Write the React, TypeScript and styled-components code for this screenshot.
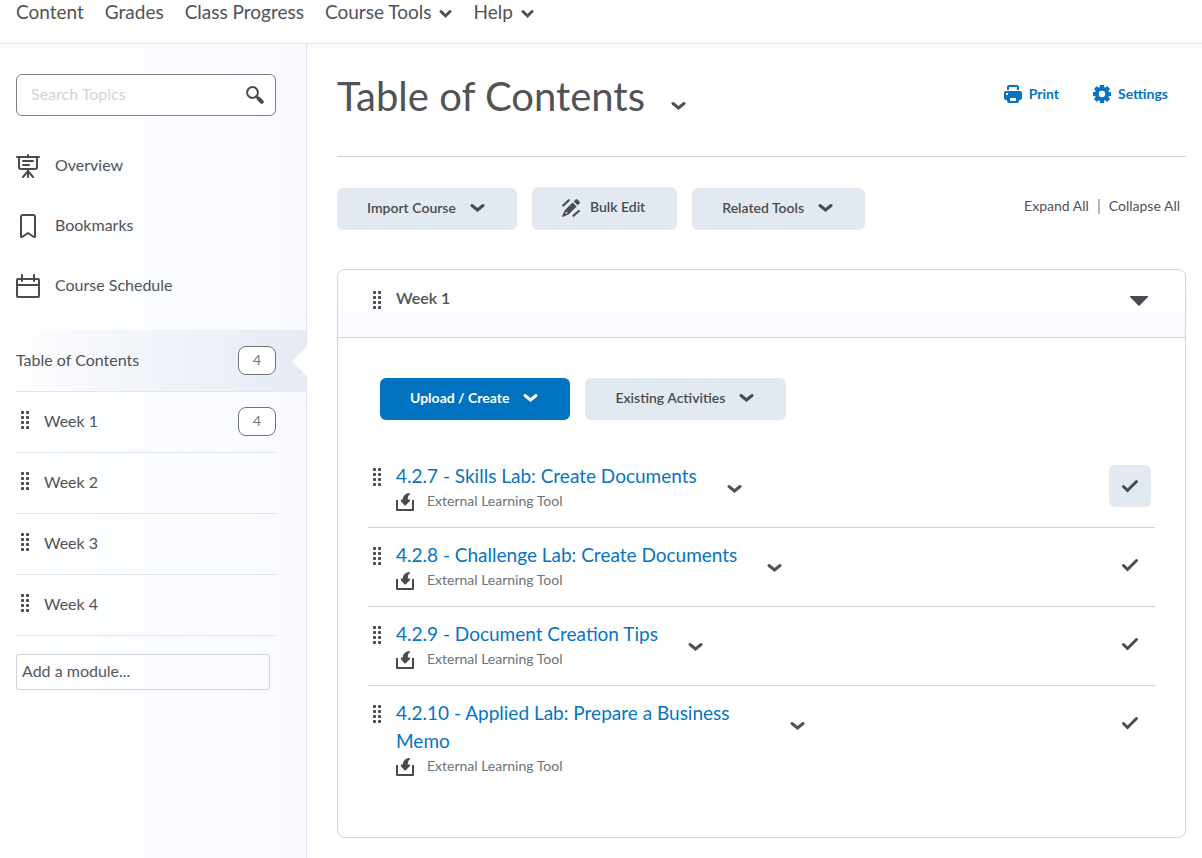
import React from "react";
import styled, { createGlobalStyle, css } from "styled-components";

const ink = "#494c4e";
const text = "#505355";
const blue = "#0674c1";
const line = "#cdd5dc";
const soft = "#e3e9f1";

const GlobalStyle = createGlobalStyle`
  *, *::before, *::after { box-sizing: border-box; }
  body {
    margin: 0;
    background: #fff;
    color: ${text};
    font-family: Lato, "Liberation Sans", sans-serif;
    font-size: 16px;
    line-height: 24px;
  }
  button, input { font: inherit; color: inherit; }
  button { border: 0; padding: 0; background: none; cursor: pointer; }
  a { color: inherit; text-decoration: none; }
  h1, h2, ul { margin: 0; padding: 0; font-weight: 400; }
  ul { list-style: none; }
  svg { display: block; flex: none; }
`;

const Page = styled.div`
  min-height: 100vh;
  display: flex;
  flex-direction: column;
`;

const NavBar = styled.nav`
  height: 44px;
  display: flex;
  align-items: flex-start;
  gap: 21px;
  padding: 0 16px;
  border-bottom: 1px solid #e3e7ea;
  font-size: 19px;
  line-height: 24px;
`;

const NavLink = styled.a``;

const NavMenu = styled.button`
  display: flex;
  align-items: center;
  gap: 8px;
  svg { margin-top: 3px; }
`;

const Columns = styled.div`
  flex: 1;
  display: grid;
  grid-template-columns: 307px minmax(0, 1fr);
  box-shadow: inset 0 4px 0 #f9fafa;
`;

const Sidebar = styled.aside`
  padding: 30px 0 20px;
  border-right: 1px solid #dfe6ef;
  background: linear-gradient(to right, rgba(247, 250, 255, 0), #f8faff);
`;

const SearchBox = styled.form`
  height: 42px;
  margin: 0 30px 19px 16px;
  padding: 0 11px 0 14px;
  display: flex;
  align-items: center;
  border: 1px solid #7c8085;
  border-radius: 6px;
  background: #fff;
`;

const SearchInput = styled.input`
  flex: 1;
  min-width: 0;
  height: 24px;
  padding: 0 0 2px;
  border: 0;
  outline: 0;
  background: none;
  &::placeholder { color: #cdd5e0; opacity: 1; }
`;

const QuickLinks = styled.ul`
  padding: 0 16px;
  margin-bottom: 15px;
`;

const QuickLink = styled.a`
  height: 60px;
  display: flex;
  align-items: center;
  gap: 15px;
`;

const ModuleList = styled.ul``;

const ModuleRow = styled.li<{ $active?: boolean }>`
  height: 61px;
  padding: 0 30px 0 16px;
  position: relative;
  ${(p) =>
    p.$active &&
    css`
      height: 62px;
      background: linear-gradient(to right, rgba(227, 233, 241, 0), #e6ebf4);
      &::after {
        content: "";
        position: absolute;
        right: -1px;
        top: 16px;
        border: 15px solid transparent;
        border-left-width: 0;
        border-right-color: #fff;
      }
    `}
`;

const ModuleLink = styled.a`
  height: 100%;
  display: flex;
  align-items: center;
  border-bottom: 1px solid #dfe6ef;
`;

const ModuleName = styled.span`
  flex: 1;
  padding-bottom: 2px;
`;

const GripSlot = styled.span`
  width: 28px;
  padding: 0 0 4px 5px;
`;

const Count = styled.span`
  width: 38px;
  height: 29px;
  margin-bottom: 1px;
  border: 1px solid #6e7477;
  border-radius: 8px;
  background: #fff;
  color: #72777a;
  font-size: 14px;
  line-height: 26px;
  text-align: center;
`;

const AddModule = styled.input`
  display: block;
  width: 254px;
  height: 36px;
  margin: 18px 0 0 16px;
  padding: 0 5px 4px;
  border: 1px solid ${line};
  border-radius: 3px;
  background: transparent;
  &::placeholder { color: #565a5c; opacity: 1; }
`;

const Main = styled.main`
  padding: 20px 16px 20px 30px;
`;

const TitleBar = styled.header`
  height: 93px;
  display: flex;
  justify-content: space-between;
  border-bottom: 1px solid ${line};
`;

const TitleGroup = styled.div`
  display: flex;
  align-items: flex-start;
  gap: 26px;
`;

const Title = styled.h1`
  font-size: 40px;
  line-height: 64px;
`;

const MenuButton = styled.button<{ $drop?: number }>`
  padding-top: ${(p) => p.$drop ?? 0}px;
`;

const Actions = styled.div`
  display: flex;
  align-items: flex-start;
  gap: 34px;
  padding: 18px 18px 0 0;
`;

const Action = styled.button`
  display: flex;
  align-items: center;
  gap: 7px;
  color: ${blue};
  font-size: 14px;
  font-weight: 700;
`;

const Toolbar = styled.div`
  display: flex;
  align-items: flex-end;
  gap: 15px;
  padding: 30px 0 39px;
`;

const Button = styled.button<{ $primary?: boolean; $tall?: boolean }>`
  height: ${(p) => (p.$tall ? 43 : 42)}px;
  padding: 0 32px ${(p) => (p.$tall ? 3 : 2)}px 30px;
  display: flex;
  align-items: center;
  gap: ${(p) => (p.$tall ? 10 : 14)}px;
  border-radius: 6px;
  background: ${(p) => (p.$primary ? "#0072bf" : soft)};
  color: ${(p) => (p.$primary ? "#fff" : ink)};
  font-size: 14px;
  font-weight: ${(p) => (p.$primary ? 700 : 600)};
`;

const ExpandLinks = styled.div`
  margin: 0 6px 12px auto;
  display: flex;
  align-items: center;
  font-size: 14px;
`;

const Divider = styled.span`
  width: 2px;
  height: 15px;
  margin: 0 9px;
  background: #b1b9be;
`;

const Panel = styled.section`
  border: 1px solid ${line};
  border-radius: 8px;
`;

const PanelHeader = styled.header`
  height: 68px;
  padding: 16px 37px 0 34px;
  display: flex;
  align-items: flex-start;
  border-bottom: 1px solid ${line};
  border-radius: 8px 8px 0 0;
  background: linear-gradient(#fff, #f9fbff);
`;

const PanelTitle = styled.h2`
  flex: 1;
  font-size: 16px;
  font-weight: 600;
`;

const PanelGrip = styled.span`
  width: 24px;
  padding: 5px 0 0 1px;
`;

const PanelTools = styled.div`
  display: flex;
  gap: 15px;
  padding: 40px 42px 29px;
`;

const Topics = styled.ul`
  padding: 0 30px 45px;
`;

const Topic = styled.li`
  padding: 13px 4px 16px;
  display: flex;
  align-items: flex-start;
  border-bottom: 1px solid #c6d3dc;
  &:last-child { border-bottom: 0; }
`;

const TopicGrip = styled.span`
  width: 24px;
  padding: 6px 0 0 1px;
`;

const TopicText = styled.div`
  max-width: 364px;
`;

const TopicLink = styled.a`
  display: block;
  color: ${blue};
  font-size: 19px;
  line-height: 28px;
`;

const TopicKind = styled.div`
  display: flex;
  align-items: flex-end;
  gap: 12px;
  padding-top: 1px;
  color: #6e7376;
  font-size: 14px;
  line-height: 20px;
`;

const TopicMenu = styled.button`
  padding: 22px 0 0 30px;
`;

const DoneButton = styled.button<{ $on?: boolean }>`
  width: 42px;
  height: 42px;
  margin: 3px 0 0 auto;
  display: grid;
  place-items: center;
  border-radius: 6px;
  background: ${(p) => (p.$on ? soft : "transparent")};
`;

const Chevron = ({ width = 15 }: { width?: number }) => (
  <svg width={width} height={10} viewBox={`0 0 ${width} 10`} fill="none" stroke="currentColor" strokeWidth="3" strokeLinecap="round" strokeLinejoin="miter">
    <path d={`M2 2.500L${width / 2} 7L${width - 2} 2.500`} />
  </svg>
);

const Grip = () => (
  <svg width="9" height="18" viewBox="0 0 9 18" fill={ink}>
    {[0, 5, 10, 15].map((y) => (
      <React.Fragment key={y}>
        <rect x="0" y={y} width="3" height="3" rx="0.800" />
        <rect x="5" y={y} width="3" height="3" rx="0.800" />
      </React.Fragment>
    ))}
  </svg>
);

const SearchIcon = () => (
  <svg width="18" height="18" viewBox="0 0 18 18" fill="none" stroke={ink}>
    <circle cx="6.500" cy="6.500" r="5.400" strokeWidth="2" />
    <path d="M10.500 10.500l2 2" strokeWidth="2" />
    <path d="M12.600 12.600l3.200 3.200" strokeWidth="4" strokeLinecap="round" />
  </svg>
);

const OverviewIcon = () => (
  <svg width="24" height="26" viewBox="0 -2 24 26" fill="none" stroke={ink} strokeWidth="2" strokeLinecap="round">
    <path d="M1 3h22M12 1v2M3 3v10a2 2 0 0 0 2 2h14a2 2 0 0 0 2-2V3M7 7h10M7 11h6M12 15v8M12 17l-5 6M12 17l5 6" />
  </svg>
);

const BookmarkIcon = () => (
  <svg width="24" height="26" viewBox="0 -2 24 26" fill="none" stroke={ink} strokeWidth="2" strokeLinejoin="round">
    <path d="M5 3a2 2 0 0 1 2-2h10a2 2 0 0 1 2 2v20h-1l-6-4-6 4H5z" />
  </svg>
);

const CalendarIcon = () => (
  <svg width="24" height="26" viewBox="0 -2 24 26" fill="none" stroke={ink} strokeWidth="2" strokeLinecap="round">
    <rect x="1" y="5" width="22" height="18" rx="1" />
    <path d="M1 11h22M6 1v6M18 1v6" />
  </svg>
);

const PrintIcon = () => (
  <svg width="18" height="18" viewBox="0 0 18 18" fill={blue}>
    <path d="M5 0h8a2 2 0 0 1 2 2v3h-2V2H5v3H3V2a2 2 0 0 1 2-2z" />
    <path fillRule="evenodd" d="M2 6h14a2 2 0 0 1 2 2v5a2 2 0 0 1-2 2h-1v1a2 2 0 0 1-2 2H5a2 2 0 0 1-2-2v-1H2a2 2 0 0 1-2-2V8a2 2 0 0 1 2-2zM6 13v3h6v-3zM2 8v2h2V8z" />
  </svg>
);

const GearIcon = () => (
  <svg width="18" height="18" viewBox="0 0 18 18">
    <g stroke={blue} strokeWidth="4.200" strokeLinecap="butt">
      <path d="M9 0v4M9 14v4M0 9h4M14 9h4M2.400 2.400l3 3M12.600 12.600l3 3M15.600 2.400l-3 3M5.400 12.600l-3 3" />
    </g>
    <circle cx="9" cy="9" r="5.200" fill="none" stroke={blue} strokeWidth="4" />
  </svg>
);

const BulkEditIcon = () => (
  <svg width="18" height="20" viewBox="0 -2 18 20" fill={ink}>
    <path fillRule="evenodd" d="M10.600 3.400l4 4-7.800 7.800L0.800 18 0 17.200l2.800-6zM4 13l-1 2.200 2.200-1 .3-1.500z" />
    <path d="M11.700 2.400L13.600.6a1.500 1.500 0 0 1 2 0l1.800 1.800a1.500 1.500 0 0 1 0 2L15.600 6.300z" />
    <path d="M1.200 6.500L6.800 1.200M11.500 16.800l5.300-4.800" stroke={ink} strokeWidth="2.200" strokeLinecap="round" />
  </svg>
);

const CaretIcon = () => (
  <svg width="18" height="10" viewBox="0 0 18 10" fill={ink}>
    <path d="M0 0h18v1L9.600 9.600a1 1 0 0 1-1.200 0L0 1z" />
  </svg>
);

const ToolIcon = () => (
  <svg width="19" height="18" viewBox="0 0 19 18" fill={ink}>
    <path d="M0 7h2v9h14V7h2v10a1 1 0 0 1-1 1H1a1 1 0 0 1-1-1z" />
    <path d="M13.800 0v1.600C12.300 2.400 11.800 4 11.800 6.500h2.400c0 1.200-.4 1.700-1.200 2.500L9.800 12.200a1 1 0 0 1-1.400 0L5.600 9c-.7-.8-.8-1.400-.8-2.500h2C6.800 3 9.500 0 13.800 0z" />
  </svg>
);

const CheckIcon = () => (
  <svg width="18" height="14" viewBox="0 0 18 14" fill="none" stroke={ink} strokeWidth="3" strokeLinecap="round">
    <path d="M2.500 7.500l4 4 9-9" />
  </svg>
);

const topics = [
  "4.2.7 - Skills Lab: Create Documents",
  "4.2.8 - Challenge Lab: Create Documents",
  "4.2.9 - Document Creation Tips",
  "4.2.10 - Applied Lab: Prepare a Business Memo",
];

const weeks = [
  { name: "Week 1", count: 4 },
  { name: "Week 2" },
  { name: "Week 3" },
  { name: "Week 4" },
];

export default function App() {
  return (
    <Page>
      <GlobalStyle />
      <NavBar>
        <NavLink href="#content">Content</NavLink>
        <NavLink href="#grades">Grades</NavLink>
        <NavLink href="#progress">Class Progress</NavLink>
        <NavMenu>Course Tools <Chevron width={13} /></NavMenu>
        <NavMenu>Help <Chevron width={13} /></NavMenu>
      </NavBar>
      <Columns>
        <Sidebar>
          <SearchBox role="search">
            <SearchInput aria-label="Search Topics" placeholder="Search Topics" />
            <button type="button" aria-label="Search"><SearchIcon /></button>
          </SearchBox>
          <QuickLinks>
            <li><QuickLink href="#overview"><OverviewIcon />Overview</QuickLink></li>
            <li><QuickLink href="#bookmarks"><BookmarkIcon />Bookmarks</QuickLink></li>
            <li><QuickLink href="#schedule"><CalendarIcon />Course Schedule</QuickLink></li>
          </QuickLinks>
          <ModuleList>
            <ModuleRow $active>
              <ModuleLink href="#toc"><ModuleName>Table of Contents</ModuleName><Count>4</Count></ModuleLink>
            </ModuleRow>
            {weeks.map((w) => (
              <ModuleRow key={w.name}>
                <ModuleLink href="#week">
                  <GripSlot><Grip /></GripSlot>
                  <ModuleName>{w.name}</ModuleName>
                  {w.count && <Count>{w.count}</Count>}
                </ModuleLink>
              </ModuleRow>
            ))}
          </ModuleList>
          <AddModule aria-label="Add a module" placeholder="Add a module..." />
        </Sidebar>
        <Main>
          <TitleBar>
            <TitleGroup>
              <Title>Table of Contents</Title>
              <MenuButton $drop={37} aria-label="Table of Contents actions"><Chevron /></MenuButton>
            </TitleGroup>
            <Actions>
              <Action><PrintIcon />Print</Action>
              <Action><GearIcon />Settings</Action>
            </Actions>
          </TitleBar>
          <Toolbar>
            <Button>Import Course <Chevron /></Button>
            <Button $tall><BulkEditIcon />Bulk Edit</Button>
            <Button>Related Tools <Chevron /></Button>
            <ExpandLinks>
              <a href="#expand">Expand All</a>
              <Divider />
              <a href="#collapse">Collapse All</a>
            </ExpandLinks>
          </Toolbar>
          <Panel>
            <PanelHeader>
              <PanelGrip><Grip /></PanelGrip>
              <PanelTitle>Week 1</PanelTitle>
              <MenuButton $drop={10} aria-label="Collapse Week 1"><CaretIcon /></MenuButton>
            </PanelHeader>
            <PanelTools>
              <Button $primary>Upload / Create <Chevron /></Button>
              <Button>Existing Activities <Chevron /></Button>
            </PanelTools>
            <Topics>
              {topics.map((t, i) => (
                <Topic key={t}>
                  <TopicGrip><Grip /></TopicGrip>
                  <TopicText>
                    <TopicLink href="#topic">{t}</TopicLink>
                    <TopicKind><ToolIcon />External Learning Tool</TopicKind>
                  </TopicText>
                  <TopicMenu aria-label={`Actions for ${t}`}><Chevron /></TopicMenu>
                  <DoneButton $on={i === 0} aria-label="Completed"><CheckIcon /></DoneButton>
                </Topic>
              ))}
            </Topics>
          </Panel>
        </Main>
      </Columns>
    </Page>
  );
}
